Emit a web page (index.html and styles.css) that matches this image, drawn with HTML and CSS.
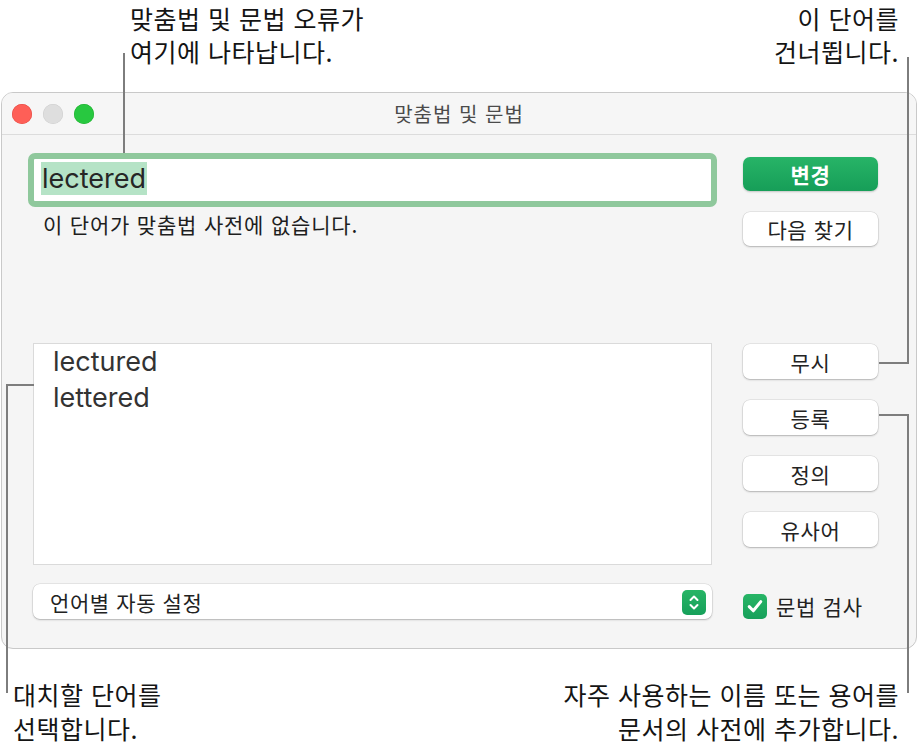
FILE: index.html
```html
<!DOCTYPE html>
<html lang="ko">
<head>
<meta charset="utf-8">
<title>맞춤법 및 문법</title>
<link rel="stylesheet" href="styles.css">
</head>
<body>
<div class="page">
  <div class="window">
    <div class="titlebar">
      <div class="lights">
        <span class="light red"></span>
        <span class="light gray"></span>
        <span class="light green"></span>
      </div>
      <div class="title">맞춤법 및 문법</div>
      <div></div>
    </div>
    <div class="content">
      <div class="left">
        <div class="field-ring">
          <div class="field"><span class="sel">lectered</span></div>
        </div>
        <div class="message">이 단어가 맞춤법 사전에 없습니다.</div>
        <div class="list">
          <div class="item">lectured</div>
          <div class="item">lettered</div>
        </div>
        <div class="popup">
          <span class="popup-label">언어별 자동 설정</span>
          <span class="stepper">
            <svg width="24" height="25" viewBox="0 0 24 25"><path d="M8.5 10 L12 6.5 L15.5 10" fill="none" stroke="#fff" stroke-width="2" stroke-linecap="round" stroke-linejoin="round"/><path d="M8.5 15 L12 18.5 L15.5 15" fill="none" stroke="#fff" stroke-width="2" stroke-linecap="round" stroke-linejoin="round"/></svg>
          </span>
        </div>
      </div>
      <div class="right">
        <div class="btn primary">변경</div>
        <div class="btn find">다음 찾기</div>
        <div class="btn ignore">무시</div>
        <div class="btn gap">등록</div>
        <div class="btn gap">정의</div>
        <div class="btn gap">유사어</div>
        <div class="check-row">
          <span class="checkbox">
            <svg width="24" height="24" viewBox="0 0 24 24"><path d="M6.2 12.6 L10.3 16.8 L17.8 7.6" fill="none" stroke="#fff" stroke-width="3" stroke-linecap="round" stroke-linejoin="round"/></svg>
          </span>
          <span class="check-label">문법 검사</span>
        </div>
      </div>
    </div>
  </div>

  <div class="note note-tl">맞춤법 및 문법 오류가<br>여기에 나타납니다.</div>
  <div class="note note-tr">이 단어를<br>건너뜁니다.</div>
  <div class="note note-bl">대치할 단어를<br>선택합니다.</div>
  <div class="note note-br">자주 사용하는 이름 또는 용어를<br>문서의 사전에 추가합니다.</div>

  <div class="line l-tl"></div>
  <div class="line l-tr-v"></div>
  <div class="line l-tr-h"></div>
  <div class="line l-br-h"></div>
  <div class="line l-br-v"></div>
  <div class="line l-bl-h"></div>
  <div class="line l-bl-v"></div>
</div>
</body>
</html>
```

FILE: styles.css
```css
* { box-sizing: border-box; }
html, body { margin: 0; padding: 0; background: #fff; }
body { font-family: "Noto Sans CJK KR", "Noto Sans", sans-serif; color: #1e1e1e; }

.page { position: relative; width: 918px; height: 748px; overflow: hidden; padding-top: 92px; }

.window {
  margin-left: 1px;
  width: 916px;
  height: 557px;
  border: 1px solid #c9c9c9;
  border-radius: 12px;
  background: #f5f5f5;
  overflow: hidden;
}

.titlebar {
  height: 42px;
  border-bottom: 1px solid #dcdcdc;
  display: grid;
  grid-template-columns: 1fr auto 1fr;
  align-items: center;
  background: #f6f6f6;
}
.lights { display: flex; gap: 11px; padding-left: 10px; padding-top: 1px; }
.light { width: 20px; height: 20px; border-radius: 50%; display: block; }
.light.red { background: #fe5f57; box-shadow: inset 0 0 0 0.5px #e2463f; }
.light.gray { background: #dedede; box-shadow: inset 0 0 0 0.5px #cdcdcd; }
.light.green { background: #28c840; box-shadow: inset 0 0 0 0.5px #1dad2b; }
.title { font-size: 20px; letter-spacing: 1px; color: #4b4b4b; }

.content {
  display: flex;
  padding-left: 26px;
}
.left { width: 689px; display: flex; flex-direction: column; }
.right { width: 135px; margin-left: 26px; display: flex; flex-direction: column; }

.field-ring {
  margin-top: 18px;
  height: 54px;
  border: 6px solid #8fc89c;
  border-radius: 7px;
  background: #fff;
}
.field {
  height: 42px;
  padding-left: 7px;
  padding-top: 3px;
  font-family: "Inter", "Liberation Sans", sans-serif;
  font-size: 27px;
  line-height: 33px;
  color: #262626;
}
.sel { background: #b5e3c6; display: inline-block; padding: 0 1px; }

.message {
  margin-left: 15px;
  margin-top: 3px;
  height: 28px;
  font-size: 21px;
  letter-spacing: 0.8px;
  line-height: 28px;
  color: #1e1e1e;
}

.list {
  margin: 105px 5px 0 5px;
  height: 222px;
  background: #fff;
  border: 1px solid #dadada;
  padding-left: 19px;
}
.item {
  font-family: "Inter", "Liberation Sans", sans-serif;
  font-size: 27px;
  line-height: 36px;
  color: #333;
}

.popup {
  margin: 19px 5px 0 5px;
  height: 35px;
  background: #fff;
  border-radius: 7px;
  box-shadow: 0 0 0 0.5px rgba(0,0,0,0.12), 0 1px 2px rgba(0,0,0,0.22);
  display: flex;
  align-items: center;
  justify-content: space-between;
  padding-left: 17px;
  padding-right: 6px;
}
.popup-label { font-size: 21px; letter-spacing: 0.6px; color: #222; }
.stepper {
  width: 24px; height: 25px;
  border-radius: 5px;
  background: linear-gradient(#27b566, #17a05a);
  display: block;
  margin-top: 2px;
}
.stepper svg { display: block; }

.btn {
  height: 34px;
  border-radius: 7px;
  background: #fff;
  box-shadow: 0 0 0 0.5px rgba(0,0,0,0.12), 0 1px 2px rgba(0,0,0,0.22);
  display: flex;
  align-items: center;
  justify-content: center;
  font-size: 21px;
  letter-spacing: 0.6px;
  color: #232323;
}
.btn.primary {
  margin-top: 22px;
  background: linear-gradient(#27b467, #169e58);
  color: #fff;
  font-weight: 700;
  box-shadow: 0 1px 2px rgba(0,0,0,0.2);
}
.btn.find { margin-top: 21px; }
.btn.ignore { margin-top: 98px; height: 35px; }
.btn.gap { margin-top: 21px; height: 35px; }

.check-row {
  margin-top: 44px;
  height: 30px;
  display: flex;
  align-items: center;
}
.checkbox {
  width: 24px; height: 25px;
  border-radius: 5px;
  background: linear-gradient(#27b566, #17a05a);
  display: block;
}
.checkbox svg { display: block; }
.check-label { margin-left: 9px; font-size: 21px; letter-spacing: 0.7px; color: #222; }

.note {
  position: absolute;
  font-size: 25px;
  letter-spacing: 0.5px;
  line-height: 33px;
  color: #141414;
  white-space: nowrap;
}
.note-tl { left: 130px; top: 2px; }
.note-tr { right: 19px; top: 2px; text-align: right; }
.note-bl { left: 13px; top: 677px; line-height: 34px; }
.note-br { right: 19px; top: 677px; text-align: right; line-height: 34px; }

.line { position: absolute; background: #7d7d7d; }
.l-tl { left: 123px; top: 53px; width: 2px; height: 100px; }
.l-tr-v { left: 907px; top: 57px; width: 2px; height: 307px; }
.l-tr-h { left: 879px; top: 362px; width: 30px; height: 2px; }
.l-br-h { left: 879px; top: 414px; width: 30px; height: 2px; }
.l-br-v { left: 907px; top: 414px; width: 2px; height: 279px; }
.l-bl-h { left: 6px; top: 384px; width: 28px; height: 2px; }
.l-bl-v { left: 6px; top: 384px; width: 2px; height: 309px; }
```
